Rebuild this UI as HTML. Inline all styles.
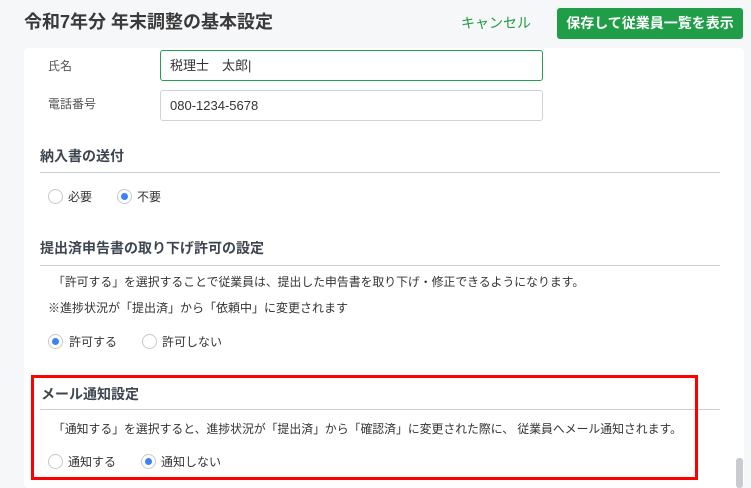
<!DOCTYPE html><html><head><meta charset="utf-8"><style>
*{margin:0;padding:0;box-sizing:border-box}
body{width:751px;height:484px;overflow:hidden;background:#f6f7f9;font-family:"Liberation Sans","Noto Sans CJK JP",sans-serif;color:#333;position:relative}
.a{position:absolute;white-space:nowrap;line-height:1}
.card{position:absolute;left:24px;top:48px;width:720px;height:440px;background:#fff;border-radius:4px}
.inp{position:absolute;left:160px;width:383px;height:31px;border:1px solid #cfd3d8;border-radius:3px;font-size:13px;padding:7px 9px;line-height:15px;color:#333}
.h{font-size:14px;font-weight:bold;color:#3d4650}
.line{position:absolute;left:40px;width:680px;height:1px;background:#c9ced4}
.r{position:absolute;width:15px;height:15px;border:1px solid #c4c9cf;border-radius:50%;background:#fff}
.r.on::after{content:"";position:absolute;left:3px;top:3px;width:7px;height:7px;border-radius:50%;background:#3b82f6}
.t{font-size:12px;color:#333}
</style></head><body>
<div class="a" style="left:24px;top:13px;font-size:18px;font-weight:bold;color:#3a3a3a">令和7年分 年末調整の基本設定</div>
<div class="a" style="left:461px;top:16px;font-size:14px;color:#1f9b3f">キャンセル</div>
<div class="a" style="left:557px;top:8px;width:186px;height:31px;background:#1f9d47;border-radius:3px;color:#fff;font-size:14px;font-weight:bold;text-align:center;padding-top:8px">保存して従業員一覧を表示</div>
<div class="card"></div>
<div class="a t" style="left:48px;top:60px;color:#555">氏名</div>
<div class="inp" style="top:50px;border-color:#22a04a">税理士　太郎|</div>
<div class="a t" style="left:48px;top:98px;color:#555">電話番号</div>
<div class="inp" style="top:90px">080-1234-5678</div>
<div class="a h" style="left:40px;top:149px">納入書の送付</div>
<div class="line" style="top:172px"></div>
<div class="r" style="left:48px;top:189px"></div><div class="a t" style="left:68px;top:191px">必要</div>
<div class="r on" style="left:117px;top:189px"></div><div class="a t" style="left:137px;top:191px">不要</div>
<div class="a h" style="left:40px;top:241px">提出済申告書の取り下げ許可の設定</div>
<div class="line" style="top:265px"></div>
<div class="a t" style="left:53px;top:277px;font-size:11.85px">「許可する」を選択することで従業員は、提出した申告書を取り下げ・修正できるようになります。</div>
<div class="a t" style="left:48px;top:302px">※進捗状況が「提出済」から「依頼中」に変更されます</div>
<div class="r on" style="left:48px;top:334px"></div><div class="a t" style="left:69px;top:336px">許可する</div>
<div class="r" style="left:142px;top:334px"></div><div class="a t" style="left:162px;top:336px">許可しない</div>
<div class="a h" style="left:41px;top:387px">メール通知設定</div>
<div class="line" style="top:409px"></div>
<div class="a t" style="left:53px;top:424px;font-size:11.85px">「通知する」を選択すると、進捗状況が「提出済」から「確認済」に変更された際に、 従業員へメール通知されます。</div>
<div class="r" style="left:48px;top:454px"></div><div class="a t" style="left:68px;top:456px">通知する</div>
<div class="r on" style="left:141px;top:454px"></div><div class="a t" style="left:161px;top:456px">通知しない</div>
<div class="a" style="left:31px;top:375px;width:667px;height:105px;border:3px solid #f00"></div>
<div class="a" style="left:736px;top:458px;width:7px;height:30px;background:#c8cbd0;border-radius:3px"></div>
</body></html>
